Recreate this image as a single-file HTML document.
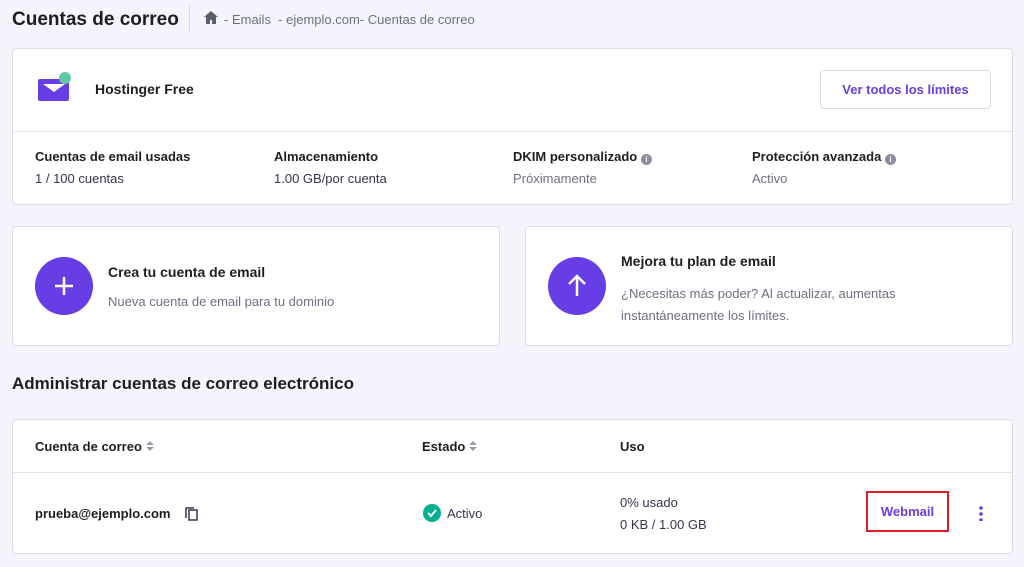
<!DOCTYPE html>
<html><head><style>
*{box-sizing:border-box;margin:0;padding:0}
body{width:1024px;height:567px;background:#f4f4fc;font-family:"Liberation Sans",sans-serif;position:relative;overflow:hidden;color:#36344d}
.abs{position:absolute}
.card{position:absolute;background:#fff;border:1px solid #dcdce6;border-radius:4px}
.b{font-weight:bold;color:#1d1e20}
.g{color:#6d7081}
.s{font-size:13px}
.i{display:inline-block;width:11px;height:11px;border-radius:50%;background:#8c8e9c;vertical-align:-1px;color:#fff;font-size:8px;text-align:center;line-height:11px}
.so{display:inline-block;vertical-align:0px;margin-left:4px}
</style></head><body>
<div class="abs b" style="left:12px;top:9px;font-size:19px">Cuentas de correo</div>
<div class="abs" style="left:189px;top:5px;width:1px;height:28px;background:#dadce0"></div>
<svg class="abs" style="left:204px;top:11px" width="14" height="13" viewBox="0 0 14 13"><path d="M7 0L0 6h2v7h4V9h2v4h4V6h2z" fill="#5c5e6e"/></svg>
<div class="abs g s" style="left:224px;top:12px">- Emails&nbsp; - ejemplo.com- Cuentas de correo</div>

<div class="card" style="left:12px;top:48px;width:1001px;height:157px">
 <div class="abs" style="left:0;top:82px;width:999px;height:1px;background:#e3e3ea"></div>
 <svg class="abs" style="left:24px;top:22px" width="36" height="30"><rect x="1" y="8" width="31" height="22" rx="2" fill="#673de6"/><path d="M6 13l11 8 11-8" fill="#fff"/><circle cx="28" cy="7" r="6" fill="#5fc9a6"/></svg>
 <div class="abs b" style="left:82px;top:32px;font-size:14px">Hostinger Free</div>
 <div class="abs" style="left:807px;top:21px;width:171px;height:39px;border:1px solid #dcdce6;border-radius:4px;color:#673de6;font-weight:bold;font-size:13px;text-align:center;line-height:37px">Ver todos los límites</div>
 <div class="abs b s" style="left:22px;top:100px">Cuentas de email usadas</div><div class="abs s" style="left:22px;top:122px">1 / 100 cuentas</div>
 <div class="abs b s" style="left:261px;top:100px">Almacenamiento</div><div class="abs s" style="left:261px;top:122px">1.00 GB/por cuenta</div>
 <div class="abs b s" style="left:500px;top:100px">DKIM personalizado <span class="i">i</span></div><div class="abs s g" style="left:500px;top:122px">Próximamente</div>
 <div class="abs b s" style="left:739px;top:100px">Protección avanzada <span class="i">i</span></div><div class="abs s g" style="left:739px;top:122px">Activo</div>
</div>

<div class="card" style="left:12px;top:226px;width:488px;height:120px">
 <div class="abs" style="left:22px;top:30px;width:58px;height:58px;border-radius:50%;background:#673de6"><svg width="58" height="58"><path d="M29 20v18M20 29h18" stroke="#fff" stroke-width="2.5"/></svg></div>
 <div class="abs b" style="left:95px;top:37px;font-size:14px">Crea tu cuenta de email</div>
 <div class="abs s g" style="left:95px;top:67px">Nueva cuenta de email para tu dominio</div>
</div>
<div class="card" style="left:525px;top:226px;width:488px;height:120px">
 <div class="abs" style="left:22px;top:30px;width:58px;height:58px;border-radius:50%;background:#673de6"><svg width="58" height="58"><path d="M29 19v20M21 27l8-8 8 8" stroke="#fff" stroke-width="2.5" fill="none"/></svg></div>
 <div class="abs b" style="left:95px;top:26px;font-size:14px">Mejora tu plan de email</div>
 <div class="abs s g" style="left:95px;top:56px;line-height:22px">¿Necesitas más poder? Al actualizar, aumentas<br>instantáneamente los límites.</div>
</div>

<div class="abs b" style="left:12px;top:374px;font-size:17px">Administrar cuentas de correo electrónico</div>

<div class="card" style="left:12px;top:419px;width:1001px;height:135px">
 <div class="abs" style="left:0;top:52px;width:999px;height:1px;background:#e3e3ea"></div>
 <div class="abs b s" style="left:22px;top:19px">Cuenta de correo<svg class="so" width="8" height="10"><path d="M0 4l4-4 4 4zM0 6l4 4 4-4z" fill="#9a9cab"/></svg></div>
 <div class="abs b s" style="left:409px;top:19px">Estado<svg class="so" width="8" height="10"><path d="M0 4l4-4 4 4zM0 6l4 4 4-4z" fill="#9a9cab"/></svg></div>
 <div class="abs b s" style="left:607px;top:19px">Uso</div>
 <div class="abs b s" style="left:22px;top:86px">prueba@ejemplo.com</div>
 <svg class="abs" style="left:172px;top:87px" width="13" height="14"><rect x="4" y="3" width="8" height="10" fill="none" stroke="#36344d" stroke-width="1.5"/><path d="M1 11V1h8" fill="none" stroke="#36344d" stroke-width="1.5"/></svg>
 <div class="abs" style="left:410px;top:84px;width:18px;height:18px;border-radius:50%;background:#00b090"><svg width="18" height="18"><path d="M5 9l3 3 5-6" stroke="#fff" stroke-width="2" fill="none"/></svg></div>
 <div class="abs s" style="left:434px;top:86px">Activo</div>
 <div class="abs s" style="left:607px;top:75px">0% usado</div>
 <div class="abs s" style="left:607px;top:97px">0 KB / 1.00 GB</div>
 <div class="abs" style="left:853px;top:71px;width:83px;height:41px;border:2px solid #e01b24;color:#673de6;font-weight:bold;font-size:13px;text-align:center;line-height:37px">Webmail</div>
 <div class="abs" style="left:966px;top:85px;width:4px;height:16px;background:radial-gradient(circle,#673de6 1.6px,transparent 2px) 0 0/4px 6px"></div>
</div>
</body></html>
